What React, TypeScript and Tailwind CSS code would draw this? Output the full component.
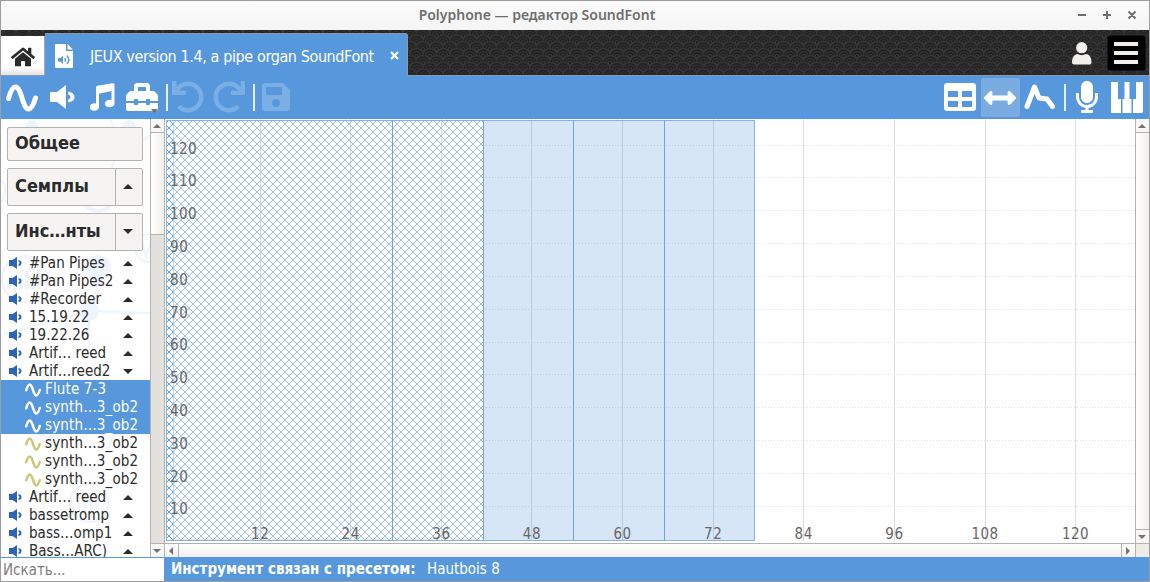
import React from "react";
import {
  FaHome,
  FaToolbox,
  FaUndo,
  FaRedo,
  FaSave,
  FaArrowsAltH,
  FaMicrophone,
} from "react-icons/fa";

type Dir = "up" | "down" | "left" | "right";

const trianglePoints: Record<Dir, string> = {
  up: "0,5 5,0 10,5",
  down: "0,0 10,0 5,5",
  left: "5,0 5,10 0,5",
  right: "0,0 5,5 0,10",
};

function Triangle({ dir, className }: { dir: Dir; className: string }) {
  const flat = dir === "up" || dir === "down";
  return (
    <svg className={className} viewBox={flat ? "0 0 10 5" : "0 0 5 10"} preserveAspectRatio="none" fill="currentColor">
      <polygon points={trianglePoints[dir]} />
    </svg>
  );
}

function Wave({ className, width }: { className: string; width: number }) {
  return (
    <svg className={className} viewBox="0 0 32 28" fill="none" stroke="currentColor" strokeWidth={width} strokeLinecap="round">
      <path d="M2.5 14.5 C5 5.500 7 3 9.500 3 C15.500 3 16.500 25 22.500 25 C25 25 27 22.500 29.500 14" />
    </svg>
  );
}

function Scales() {
  return (
    <svg className="absolute inset-0 h-full w-full">
      <defs>
        <pattern id="scales" x="8.3" y="5.5" width="13.35" height="13.6" patternUnits="userSpaceOnUse">
          <rect width="14" height="14" fill="#1a1a1a" />
          {[-6.8, 0, 6.8, 13.6, 20.4].map((y, row) => (
            <g key={y} fill="#1a1a1a" stroke="#353535" strokeWidth="1.5">
              {(row % 2 ? [0, 13.35] : [-6.68, 6.67, 20.02]).map((x) => (
                <g key={x}>
                  <circle cx={x} cy={y} r="7" />
                  <circle cx={x} cy={y} r="4.4" />
                  <circle cx={x} cy={y} r="1.8" />
                </g>
              ))}
            </g>
          ))}
        </pattern>
      </defs>
      <rect width="100%" height="100%" fill="url(#scales)" />
    </svg>
  );
}

function TitleBar() {
  return (
    <div className="relative flex h-[29px] shrink-0 items-center justify-center bg-linear-to-b from-[#fbfbfb] to-[#f5f5f5] text-[#6e6e6e]">
      <span className="mr-[76px] mt-[-2px] whitespace-nowrap font-['Noto_Sans'] text-[14px] leading-[20px] font-semibold">
        Polyphone — редактор SoundFont
      </span>
      <svg className="absolute right-[12px] top-[9px] h-[10px] w-[60px]" viewBox="0 0 60 10" stroke="currentColor" strokeWidth="2" fill="none">
        <path d="M1 5H9M26 5H34M30 1V9M51.500 1.500L58.500 8.500M58.500 1.500L51.500 8.500" />
      </svg>
    </div>
  );
}

function TabBar() {
  return (
    <div className="relative flex h-[46px] shrink-0 border-b border-[#8c97a5] bg-[#1c1c1c]">
      <Scales />
      <div className="relative mt-[6px] flex h-[39px] w-[44px] items-center justify-center border-r border-[#a9a9a9] bg-linear-to-b from-white from-80% to-[#e4e4e4] text-[#2b2b2b]">
        <FaHome className="mt-[2px] h-[24px] w-[24px]" />
      </div>
      <div className="relative mb-[-1px] mt-[3px] flex w-[363px] items-center rounded-tr-[3px] border-r border-t border-[#8c97a5] bg-[#5797dc] pl-[10px] text-white">
        <svg className="mt-[2px] h-[24px] w-[18px]" viewBox="0 0 18 24" fill="white">
          <path d="M1 0H11V7H18V23a1 1 0 0 1-1 1H1a1 1 0 0 1-1-1V1a1 1 0 0 1 1-1ZM12.500 0L18 5.500H12.500Z" />
          <path d="M3 14H5.500L8 11.500V20L5.500 17.500H3Z" fill="#5797dc" />
          <path d="M9.700 14.200Q11.200 15.800 9.700 17.400M11.800 11.500Q16 15.800 11.800 20" fill="none" stroke="#5797dc" strokeWidth="1.400" />
        </svg>
        <span className="ml-[17px] mt-[3px] whitespace-nowrap text-[16px] leading-[20px] tracking-[-0.39px]">
          JEUX version 1.4, a pipe organ SoundFont
        </span>
        <svg className="absolute right-[8px] top-[17px] h-[9px] w-[9px]" viewBox="0 0 9 9" stroke="white" strokeWidth="2.2">
          <path d="M1 1L8 8M8 1L1 8" />
        </svg>
      </div>
      <div className="relative ml-auto flex items-center pr-[3px] pt-px">
        <svg className="mr-[15px] h-[23px] w-[20px]" viewBox="0 0 20 23" fill="#f2efeb">
          <circle cx="9.700" cy="5.700" r="5.600" />
          <path d="M0 20.500C0 15 2.500 12.500 5.500 12C8 13.500 11.500 13.500 14 12C17.500 12.500 19.500 15 19.500 20.500Q19.500 22.500 17.500 22.500H2Q0 22.500 0 20.500Z" />
        </svg>
        <div className="flex h-[36px] w-[39px] flex-col items-center justify-center gap-[5px] rounded-[3px] border border-[#161616] bg-black pr-px">
          <i className="h-[4px] w-[24px] bg-[#f2efeb]" />
          <i className="h-[4px] w-[24px] bg-[#f2efeb]" />
          <i className="h-[4px] w-[24px] bg-[#f2efeb]" />
        </div>
      </div>
    </div>
  );
}

function Toolbar() {
  return (
    <div className="flex h-[43px] shrink-0 items-center bg-[#5797dc] pb-px pl-[4px] pr-[6px] text-white">
      <Wave className="mt-[2px] h-[28px] w-[34px]" width={5} />
      <svg className="ml-[11px] h-[26px] w-[26px]" viewBox="0 0 26 26" fill="white">
        <path d="M1 8H7L16 1V25L7 18H1Q0 18 0 17V9Q0 8 1 8Z" />
        <path d="M18 7.500Q24.500 8.500 24.500 13T18 18.500V15.500Q20.500 15 20.500 13T18 10.500Z" />
      </svg>
      <svg className="ml-[14px] h-[28px] w-[26px]" viewBox="0 0 26 28" fill="white">
        <path d="M6 4.500Q6 3.200 7.300 2.800L22.500 0.200Q24.500 0 24.500 1.500V20.500A4.800 3.800 0 1 1 21.500 17V8L9 10.800V24A4.700 3.800 0 1 1 6 20.500Z" />
      </svg>
      <div className="relative ml-[10px] h-[32px] w-[32px]">
        <FaToolbox className="h-[32px] w-[32px]" />
        <Triangle dir="down" className="absolute bottom-0 right-0 h-[4px] w-[7px] text-[#77726d]" />
      </div>
      <i className="ml-[8px] h-[27px] w-[2px] bg-[#e8edf2]" />
      <FaUndo className="ml-[4px] mt-[-1px] h-[32px] w-[32px] text-[#7baee4]" />
      <FaRedo className="ml-[9px] mt-[-1px] h-[32px] w-[32px] text-[#7baee4]" />
      <i className="ml-[8px] h-[27px] w-[2px] bg-[#e8edf2]" />
      <FaSave className="ml-[5px] h-[32px] w-[32px] text-[#7baee4]" />
      <div className="ml-auto flex items-center">
        <svg className="h-[28px] w-[32px]" viewBox="0 0 32 28">
          <rect width="32" height="28" rx="3" fill="white" />
          <path d="M4 8H14V14H4ZM18 8H28V14H18ZM4 18H14V24H4ZM18 18H28V24H18Z" fill="#5797dc" />
        </svg>
        <div className="ml-[5px] mt-px flex h-[39px] w-[39px] items-center justify-center rounded-[2px] bg-[#7aace2] pr-px">
          <FaArrowsAltH className="h-[32px] w-[32px]" />
        </div>
        <svg className="ml-[4px] h-[28px] w-[32px]" viewBox="0 0 32 28" fill="none" stroke="white" strokeWidth="5" strokeLinecap="round" strokeLinejoin="round">
          <path d="M3 23.500L10.500 4L15 15L23 16L28.500 23.500" />
        </svg>
        <i className="ml-[8px] h-[27px] w-[2px] bg-[#e8edf2]" />
        <FaMicrophone className="ml-[9px] h-[32px] w-[24px]" />
        <svg className="ml-[12px] mt-px h-[31px] w-[32px]" viewBox="0 0 32 31" fill="white">
          <path d="M0 0H7V17H10V31H0.500L0 30ZM13.500 0H18.500V17H20.500V31H11.500V17H13.500ZM25 0H32V30L31 31H22V17H25Z" />
        </svg>
      </div>
    </div>
  );
}

function SectionButton({ label, dir, className }: { label: string; dir?: Dir; className: string }) {
  return (
    <div className={`flex w-[136px] shrink-0 rounded-[2px] border border-[#b4b2b0] bg-[#f5f4f2] text-[#2b2b2b] ${className}`}>
      <span className={`flex-1 whitespace-nowrap pl-[7px] text-[18px] leading-[28px] font-bold ${dir ? "pt-[3px]" : "pt-px"}`}>
        {label}
      </span>
      {dir && (
        <span className="flex w-[27px] items-center justify-center border-l border-[#b4b2b0] pb-px pr-[2px]">
          <Triangle dir={dir} className="h-[5px] w-[10px]" />
        </span>
      )}
    </div>
  );
}

type Item = { text: string; dir?: Dir; child?: boolean; selected?: boolean };

const items: Item[] = [
  { text: "#Pan Pipes", dir: "up" },
  { text: "#Pan Pipes2", dir: "up" },
  { text: "#Recorder", dir: "up" },
  { text: "15.19.22", dir: "up" },
  { text: "19.22.26", dir: "up" },
  { text: "Artif… reed", dir: "up" },
  { text: "Artif…reed2", dir: "down" },
  { text: "Flute 7-3", child: true, selected: true },
  { text: "synth…3_ob2", child: true, selected: true },
  { text: "synth…3_ob2", child: true, selected: true },
  { text: "synth…3_ob2", child: true },
  { text: "synth…3_ob2", child: true },
  { text: "synth…3_ob2", child: true },
  { text: "Artif… reed", dir: "up" },
  { text: "bassetromp", dir: "up" },
  { text: "bass…omp1", dir: "up" },
  { text: "Bass…ARC)", dir: "up" },
];

function Row({ item }: { item: Item }) {
  if (item.child) {
    return (
      <div className={`flex h-[18px] shrink-0 items-center pl-[24px] ${item.selected ? "bg-[#5797dc] text-white" : "text-[#2b2b2b]"}`}>
        <Wave className={`mt-[2px] h-[14px] w-[16px] ${item.selected ? "text-white" : "text-[#c9c878]"}`} width={5} />
        <span className="ml-[4px] whitespace-nowrap text-[15px] leading-[18px] tracking-[0.15px]">{item.text}</span>
      </div>
    );
  }
  return (
    <div className="flex h-[18px] shrink-0 items-center pl-[8px] text-[#2b2b2b]">
      <svg className="h-[12px] w-[13px] text-[#2f63b4]" viewBox="0 0 13 12" fill="currentColor">
        <path d="M0 3H3.500L8 0V12L3.500 9H0ZM9.500 3Q12.500 3.500 12.500 6T9.500 9V7.300Q10.500 7 10.500 6T9.500 4.700Z" />
      </svg>
      <span className="ml-[7px] w-[94px] whitespace-nowrap text-[15px] leading-[18px] tracking-[0.04px]">{item.text}</span>
      <Triangle dir={item.dir ?? "up"} className="mt-px h-[5px] w-[10px]" />
    </div>
  );
}

function SidebarArt() {
  return (
    <svg className="absolute inset-0 h-full w-full" fill="none" stroke="#edf4fb" strokeWidth="2">
      <circle cx="24" cy="160" r="23" />
      <path d="M8 170V162M14 170V156M20 170V160M26 170V152M32 170V158M38 170V150" strokeWidth="4" />
      <circle cx="-14" cy="72" r="18" />
      <circle cx="134" cy="-2" r="24" />
      <path d="M107 57L114 41M98 160L90 195M88 192L0 216M88 192L150 194M88 192V236M100 296L118 306L102 340" />
      <circle cx="97" cy="149" r="12" fill="#edf4fb" />
      <circle cx="88" cy="192" r="9" fill="#edf4fb" />
      <circle cx="31" cy="7" r="5" fill="#edf4fb" />
      <circle cx="128" cy="8" r="6" fill="#edf4fb" />
      <path d="M84 86Q97 98 110 86" strokeWidth="4" />
      <circle cx="148" cy="129" r="14" />
      <path d="M136 131L141 120L145 139L150 122" />
      <circle cx="48" cy="298" r="20" />
      <circle cx="88" cy="384" r="19" />
      <path d="M78 376V393M84 376V393M90 376V393M96 376V393" strokeWidth="3" />
    </svg>
  );
}

function Sidebar() {
  return (
    <div className="relative flex w-[149px] shrink-0 flex-col overflow-hidden bg-white">
      <SidebarArt />
      <div className="relative flex min-h-0 flex-1 flex-col">
        <SectionButton label="Общее" className="ml-[6px] mt-[8px] h-[34px]" />
        <SectionButton label="Семплы" dir="up" className="ml-[6px] mt-[7px] h-[38px]" />
        <SectionButton label="Инс…нты" dir="down" className="ml-[6px] mt-[7px] h-[38px]" />
        <div className="mt-[3px] flex min-h-0 flex-1 flex-col overflow-hidden">
          {items.map((item, i) => (
            <Row key={i} item={item} />
          ))}
        </div>
      </div>
    </div>
  );
}

function VerticalScroll({ full }: { full?: boolean }) {
  return (
    <div className="flex w-[14px] shrink-0 flex-col border-l border-[#b4b2b0] bg-[#e2e1de]">
      <div className="flex h-[14px] shrink-0 items-center justify-center border-b border-[#b4b2b0] bg-[#f8f7f6] pr-px">
        <Triangle dir="up" className="h-[4px] w-[8px] text-[#77726d]" />
      </div>
      <div className={`border-b border-[#b4b2b0] bg-linear-to-r from-white to-[#f2efec] ${full ? "flex-1" : "h-[102px]"}`} />
      {!full && <div className="flex-1" />}
      <div className={`flex shrink-0 items-center justify-center bg-[#f8f7f6] pr-px ${full ? "h-[13px]" : "h-[14px] border-t border-[#b4b2b0]"}`}>
        <Triangle dir="down" className="h-[4px] w-[8px] text-[#77726d]" />
      </div>
      {full && <div className="h-[14px] shrink-0 border-t border-[#b4b2b0] bg-[#efebe7]" />}
    </div>
  );
}

const octaves = [12, 24, 36, 48, 60, 72, 84, 96, 108, 120];
const velocities = [120, 110, 100, 90, 80, 70, 60, 50, 40, 30, 20, 10];
const rangeEdges = [227.5, 318.5, 408.5, 499.5];
const hatchPixels = [
  [0, 0], [7, 0], [1, 1], [6, 1], [2, 2], [5, 2], [3, 3], [4, 3],
  [3, 4], [4, 4], [2, 5], [5, 5], [1, 6], [6, 6], [0, 7], [7, 7],
];

function Chart() {
  return (
    <svg className="block h-[424px] w-[970px] shrink-0 bg-white" viewBox="0 0 970 424" shapeRendering="crispEdges">
      <defs>
        <pattern id="hatch" x="4" y="1" width="8" height="8" patternUnits="userSpaceOnUse">
          {hatchPixels.map(([x, y]) => (
            <rect key={`${x}-${y}`} x={x} y={y} width="1" height="1" fill="#9cc2ec" />
          ))}
        </pattern>
        <pattern id="hatchDense" x="4" y="1" width="8" height="8" patternUnits="userSpaceOnUse">
          {hatchPixels.map(([x, y]) => (
            <rect key={`${x}-${y}`} x={x} y={y} width="1" height="1" fill="#5f9fe2" />
          ))}
        </pattern>
      </defs>
      {octaves.map((n, i) => (
        <rect key={n} x={Math.round(94.7 + i * 90.6)} y="0" width="1" height="422" fill="#dcdcdc" />
      ))}
      {velocities.map((v, i) => (
        <line key={v} x1="0" x2="970" y1={Math.round(25.6 + i * 32.82) + 0.5} y2={Math.round(25.6 + i * 32.82) + 0.5} stroke="#dfdfdf" strokeDasharray="1 2" />
      ))}
      <rect x="1" y="1" width="317" height="421" fill="url(#hatch)" />
      <rect x="1" y="1" width="7" height="421" fill="url(#hatchDense)" />
      <rect x="318" y="1" width="272" height="421" fill="#5797dc" fillOpacity="0.24" />
      <rect x="1.5" y="1.5" width="588" height="420" fill="none" stroke="#82b3ea" />
      {rangeEdges.map((x) => (
        <line key={x} x1={x} x2={x} y1="1" y2="422" stroke="#6ba4e4" />
      ))}
      <line x1="8.500" x2="8.500" y1="1" y2="422" stroke="#82b3ea" strokeOpacity="0.5" />
      <g fill="#666666" fontSize="15" className="font-['DejaVu_Sans_Condensed','DejaVu_Sans',sans-serif] [font-stretch:75%]">
        {velocities.map((v, i) => (
          <text key={v} x="5" y={34.5 + i * 32.8} textLength={v > 99 ? 26.6 : 17.8}>
            {v}
          </text>
        ))}
        {octaves.map((n, i) => (
          <text key={n} x={(n > 99 ? 81.7 : 86) + i * 90.6} y="420" textLength={n > 99 ? 26.6 : 17.8}>
            {n}
          </text>
        ))}
      </g>
    </svg>
  );
}

export default function App() {
  return (
    <div className="flex h-[582px] w-[1150px] flex-col overflow-hidden border border-[#9d9d9d] bg-white font-['DejaVu_Sans_Condensed','DejaVu_Sans',sans-serif] [font-stretch:75%]">
      <TitleBar />
      <TabBar />
      <Toolbar />
      <div className="flex h-[438px] shrink-0">
        <Sidebar />
        <VerticalScroll />
        <div className="flex w-[971px] shrink-0 flex-col border-l border-[#b4b2b0]">
          <Chart />
          <div className="flex h-[14px] shrink-0 border-t border-[#b4b2b0] bg-linear-to-b from-white to-[#f2efec]">
            <div className="flex w-[14px] items-center justify-center border-r border-[#b4b2b0] pr-px">
              <Triangle dir="left" className="h-[8px] w-[4px] text-[#77726d]" />
            </div>
            <div className="flex-1" />
            <div className="flex w-[14px] items-center justify-center border-l border-[#b4b2b0] pr-px">
              <Triangle dir="right" className="h-[8px] w-[4px] text-[#77726d]" />
            </div>
          </div>
        </div>
        <VerticalScroll full />
      </div>
      <div className="flex h-[24px] shrink-0 bg-[#5797dc] text-[15px] leading-[24px] text-white">
        <div className="mt-[1px] w-[163px] whitespace-nowrap bg-white pl-[2px] text-[#7d7d7d]">Искать...</div>
        <span className="ml-[7px] w-[256px] whitespace-nowrap font-bold">Инструмент связан с пресетом:</span>
        <span className="whitespace-nowrap">Hautbois 8</span>
      </div>
    </div>
  );
}
